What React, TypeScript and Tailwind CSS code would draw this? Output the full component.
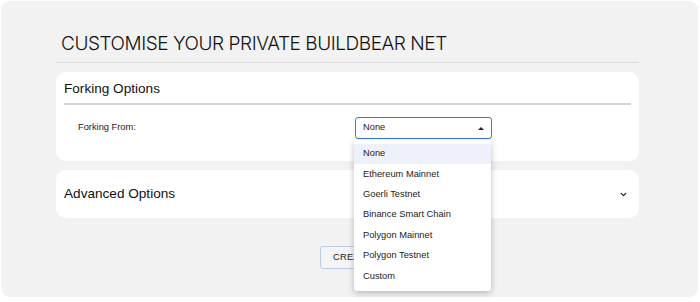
import { ChevronDown } from "lucide-react";

const networks = [
  "None",
  "Ethereum Mainnet",
  "Goerli Testnet",
  "Binance Smart Chain",
  "Polygon Mainnet",
  "Polygon Testnet",
  "Custom",
];

export default function App() {
  return (
    <div className="w-[700px] h-[302px] bg-white p-px overflow-hidden" style={{ fontFamily: '"Liberation Sans", Arial, sans-serif' }}>
      <div className="relative w-[697px] h-[296px] rounded-[9px] bg-[#f2f2f2]">
        <div className="ml-[55px] w-[583px] pt-[30px]">
          {/* Title */}
          <h1
            className="pl-[5px] text-[19px] leading-[26px] text-[#111] font-light tracking-[-0.45px]"
            style={{ fontFamily: 'Inter, "Noto Sans", sans-serif' }}
          >
            CUSTOMISE YOUR PRIVATE BUILDBEAR NET
          </h1>
          <div className="mt-[5px] h-px bg-[#dcdcdc]" />

          {/* Forking options */}
          <div className="mt-[9px] h-[89px] rounded-[10px] bg-white px-[8px] pt-[7px]">
            <h2 className="text-[13.6px] leading-[20px] text-[#111]">Forking Options</h2>
            <div className="mt-[4px] h-[2px] bg-[#d4d4d4]" />
            <div className="flex items-center mt-[12px] h-[22px]">
              <span className="w-[291px] pl-[14px] text-[9.3px] text-[#222]">Forking From:</span>
              <div className="flex items-center justify-between w-[137px] h-[22px] rounded-[3px] border border-[#3b78d8] pl-[7px] pr-[7px]">
                <span className="text-[9.3px] text-[#222]">None</span>
                <span className="w-0 h-0 border-l-[3px] border-r-[3px] border-b-[3px] border-l-transparent border-r-transparent border-b-[#222]" />
              </div>
            </div>
          </div>

          {/* Advanced options */}
          <div className="mt-[9px] h-[48px] rounded-[10px] bg-white flex items-center justify-between pl-[8px] pr-[11px]">
            <span className="text-[13.6px] text-[#111]">Advanced Options</span>
            <ChevronDown size={9} strokeWidth={3.5} className="text-[#222]" />
          </div>

          {/* Create */}
          <div className="flex mt-[28px] pl-[264px]">
            <button className="h-[23px] px-[12px] rounded-[3px] border border-[#b9cdea] bg-[#f5f5f5] text-[9.3px] text-[#222] tracking-[0.3px]">
              CREATE
            </button>
          </div>
        </div>

        {/* Dropdown menu */}
        <div className="absolute left-[353px] top-[139px] w-[137px] py-[4px] rounded-[3px] bg-white shadow-[0_2px_6px_rgba(0,0,0,0.25)]">
          {networks.map((n, i) => (
            <div
              key={n}
              className={`h-[20.4px] flex items-center pl-[9px] text-[9.3px] text-[#222] ${i === 0 ? "bg-[#eef1fa]" : ""}`}
            >
              {n}
            </div>
          ))}
        </div>
      </div>
    </div>
  );
}
